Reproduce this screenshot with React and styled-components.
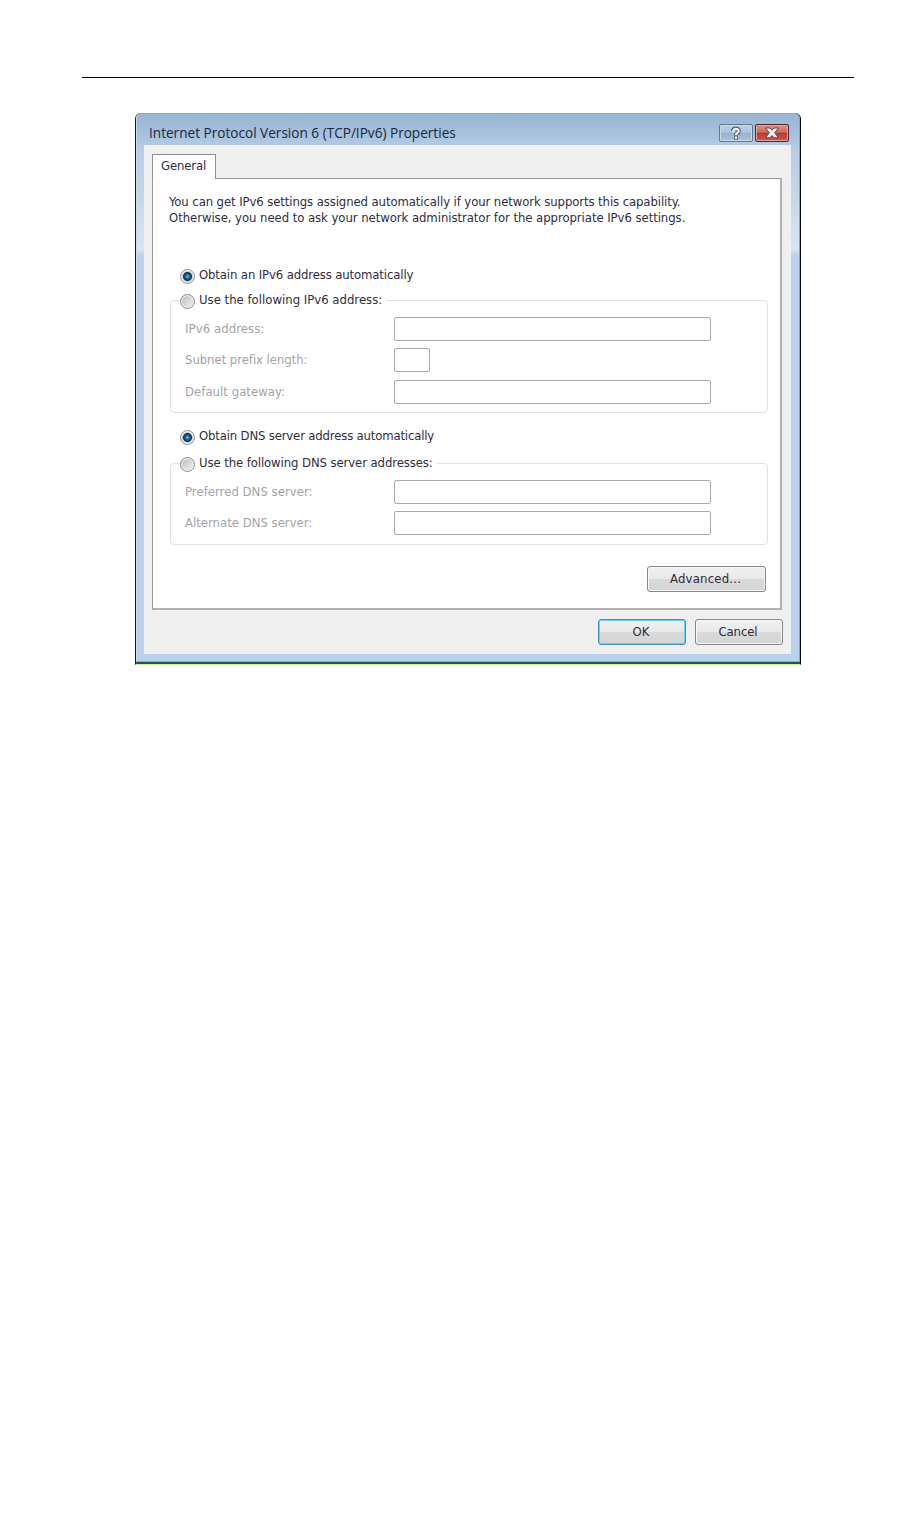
import styled, { createGlobalStyle } from 'styled-components'

const GlobalStyle = createGlobalStyle`
  body {
    margin: 0;
    background: #fff;
  }

  * {
    box-sizing: border-box;
  }
`

const Page = styled.div`
  width: 908px;
  height: 1530px;
  padding: 77px 54px 0 82px;
  font-family: 'DejaVu Sans Condensed', 'DejaVu Sans', sans-serif;
  font-size: 13px;
  color: #302c40;
`

const Rule = styled.div`
  height: 1px;
  background: #000;
`

const Dialog = styled.div`
  width: 666px;
  height: 552px;
  margin: 35px 0 0 53px;
  padding-bottom: 2px;
  display: flex;
  flex-direction: column;
  border-left: 1px solid #10141c;
  border-right: 1px solid #02080c;
  border-bottom: 1px solid #d8ec9a;
  border-radius: 6px 6px 0 0;
  background: #1f5560;
`

const Frame = styled.div`
  flex: 1;
  display: flex;
  flex-direction: column;
  padding: 0 8px 7px 7px;
  border-left: 1px solid #cddcec;
  border-right: 1px solid #58b8dc;
  border-bottom: 1px solid #5cc4e4;
  border-top: 1px solid #8fa9c0;
  border-radius: 5px 5px 0 0;
  background: linear-gradient(#98b5d2 0, #a6c1dc 20px, #b4cde6 33px, #c3d7ea 80px, #d8e5f1 135px, #b9d1ea 142px);
`

const TitleBar = styled.div`
  height: 31px;
  display: flex;
  align-items: flex-start;
`

const Title = styled.div`
  flex: 1;
  padding: 9px 0 0 5px;
  font-family: 'Open Sans', 'Noto Sans', sans-serif;
  font-size: 13.6px;
  line-height: 19px;
  color: #1f2440;
`

const CaptionButton = styled.button`
  width: 34px;
  height: 18px;
  margin: 10px 2px 0 0;
  padding: 0;
  display: flex;
  align-items: center;
  justify-content: center;
  border: 1px solid ${p => p.$close ? '#56262c' : '#63778e'};
  border-radius: 2px;
  box-shadow: inset 0 0 0 1px ${p => p.$close ? '#e0a39b' : '#c9dae9'};
  background: ${p => p.$close
    ? 'linear-gradient(#d99086 0, #cd6b60 45%, #b93a30 50%, #c9594c 100%)'
    : 'linear-gradient(#bccfe2 0, #b0c6dc 45%, #98b2cc 50%, #abc3da 100%)'};
`

const Body = styled.div`
  flex: 1;
  display: flex;
  flex-direction: column;
  padding: 9px 8px 0 8px;
  background: #efefef;
`

const Tab = styled.div`
  width: 64px;
  height: 25px;
  margin-bottom: -1px;
  padding-left: 8px;
  z-index: 1;
  border: 1px solid #8c8e92;
  border-bottom: 0;
  background: #fff;
  line-height: 22px;
  letter-spacing: -0.15px;
`

const Panel = styled.div`
  width: 630px;
  height: 432px;
  display: flex;
  flex-direction: column;
  padding: 15px 14px 0 17px;
  border: 1px solid #96989b;
  border-right: 2px solid #b0b1b3;
  border-bottom: 2px solid #b0b1b3;
  background: #fff;
`

const Note = styled.p`
  height: 31px;
  margin: 0 0 42px -1px;
  line-height: 16px;
  white-space: nowrap;
`

const Text = styled.span`
  letter-spacing: ${p => p.$track || 0}px;
  white-space: nowrap;
`

const Choice = styled.label`
  width: max-content;
  height: 16px;
  margin-left: 10px;
  padding-right: 4px;
  display: flex;
  align-items: center;
  gap: 4px;
  line-height: 15px;
  background: #fff;

  & > ${Text} {
    padding-bottom: 2px;
  }
`

const RadioDot = styled.span`
  width: 15px;
  height: 15px;
  margin-top: 3px;
  border: 1px solid #8b8e90;
  border-radius: 50%;
  box-shadow: inset 0 0 0 1px #f1f2f3;
  background: ${p => p.$checked
    ? 'radial-gradient(circle at 50% 50%, #7fd0ec 0, #1f6d9c 1.8px, #12304f 4px, #c4cbd0 5px, #e6e9eb 6px)'
    : 'linear-gradient(135deg, #b9bcbe, #f4f4f4)'};
`

const Group = styled.div`
  width: 598px;
  height: ${p => p.$height}px;
  margin: ${p => p.$margin};
  display: flex;
  flex-direction: column;
  border: 1px solid #dde2e2;
  border-radius: 4px;

  & > ${Choice} {
    margin: -9px 0 9px 9px;
  }
`

const Field = styled.div`
  height: 24px;
  margin-bottom: ${p => p.$gap || 7}px;
  display: flex;
  align-items: center;
  padding-left: 14px;
  color: #a3a3a6;
`

const FieldLabel = styled.label`
  width: 209px;
  padding-bottom: 2px;
  letter-spacing: ${p => p.$track || 0}px;
`

const Input = styled.input`
  width: ${p => p.$short ? 36 : 317}px;
  height: 24px;
  padding: 0 4px;
  border: 1px solid #a9aaac;
  border-radius: 2px;
  background: #fff;
`

const Button = styled.button`
  width: ${p => p.$width}px;
  height: 26px;
  padding: 0 2px 1px 0;
  border: 1px solid ${p => p.$primary ? '#3f93b8' : '#85878a'};
  border-radius: 3px;
  box-shadow: inset 0 0 0 1px ${p => p.$primary ? '#6ccdf0' : '#f6f6f6'};
  background: linear-gradient(#f1f1f1 0, #e8e8e8 48%, #d9dadb 52%, #d3d4d5 100%);
  font: inherit;
  color: #302c40;
  letter-spacing: ${p => p.$track || 0}px;
`

const PanelFooter = styled.div`
  display: flex;
  justify-content: flex-end;
  padding-top: 21px;
`

const Footer = styled.div`
  display: flex;
  justify-content: flex-end;
  gap: 9px;
  padding-top: 9px;
`

const HelpIcon = () => (
  <svg width="14" height="15" viewBox="0 0 14 15" fill="none">
    <path d="M4 5C4 1.6 9.8 1.6 9.8 4.9C9.8 7.2 7 6.9 7 9.4M7 10.6V13.4" stroke="#4c5868" strokeWidth="4" />
    <path d="M4.2 5.4C4.2 2.2 9.7 2.2 9.7 4.9C9.7 7 7 6.9 7 9M7 10.8V12.8" stroke="#f0f3f6" strokeWidth="2.2" />
  </svg>
)

const CloseIcon = () => (
  <svg width="16" height="12" viewBox="0 0 16 12">
    <path
      d="M1.5 1H6L8 3.2L10 1H14.5L10.7 5.8L14.5 10.8H10L8 8.5L6 10.8H1.5L5.3 5.8Z"
      fill="#f4f1f1"
      stroke="#6b4448"
    />
  </svg>
)

const Radio = ({ checked, track, children }) => (
  <Choice>
    <RadioDot $checked={checked} />
    <Text $track={track}>{children}</Text>
  </Choice>
)

const addressFields = [
  { label: 'IPv6 address:', track: 0.07, gap: 7 },
  { label: 'Subnet prefix length:', track: -0.05, short: true, gap: 8 },
  { label: 'Default gateway:', track: 0.03 },
]

const dnsFields = [
  { label: 'Preferred DNS server:', track: 0.03 },
  { label: 'Alternate DNS server:', track: 0 },
]

const Fields = ({ items }) => items.map(item => (
  <Field key={item.label} $gap={item.gap}>
    <FieldLabel $track={item.track}>{item.label}</FieldLabel>
    <Input $short={item.short} disabled />
  </Field>
))

const App = () => {
  return (
    <Page>
      <GlobalStyle />
      <Rule />
      <Dialog>
        <Frame>
          <TitleBar>
            <Title>Internet Protocol Version 6 (TCP/IPv6) Properties</Title>
            <CaptionButton aria-label="Help"><HelpIcon /></CaptionButton>
            <CaptionButton aria-label="Close" $close><CloseIcon /></CaptionButton>
          </TitleBar>
          <Body>
            <Tab>General</Tab>
            <Panel>
              <Note>
                <Text $track={-0.1}>You can get IPv6 settings assigned automatically if your network supports this capability.</Text>
                <br />
                <Text $track={-0.06}>Otherwise, you need to ask your network administrator for the appropriate IPv6 settings.</Text>
              </Note>
              <Radio checked track={-0.13}>Obtain an IPv6 address automatically</Radio>
              <Group $height={113} $margin="17px 0 15px">
                <Radio>Use the following IPv6 address:</Radio>
                <Fields items={addressFields} />
              </Group>
              <Radio checked track={-0.17}>Obtain DNS server address automatically</Radio>
              <Group $height={82} $margin="19px 0 0">
                <Radio track={-0.1}>Use the following DNS server addresses:</Radio>
                <Fields items={dnsFields} />
              </Group>
              <PanelFooter>
                <Button $width={119} $track={0.2}>Advanced...</Button>
              </PanelFooter>
            </Panel>
            <Footer>
              <Button $width={88} $primary>OK</Button>
              <Button $width={88} $track={-0.1}>Cancel</Button>
            </Footer>
          </Body>
        </Frame>
      </Dialog>
    </Page>
  )
}

export default App
